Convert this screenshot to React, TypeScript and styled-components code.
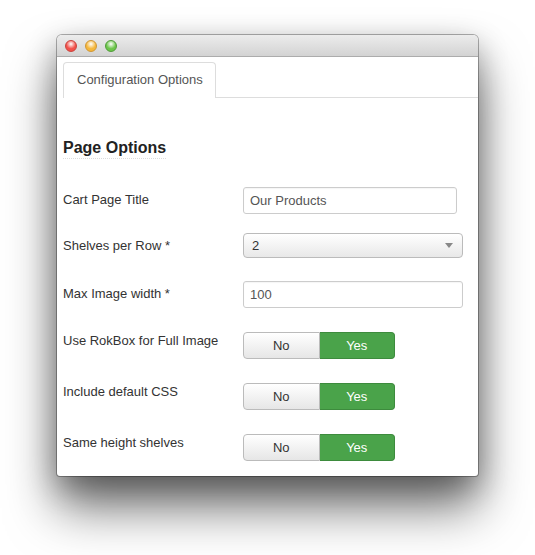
import React from 'react';
import styled, { createGlobalStyle } from 'styled-components';

const GlobalStyle = createGlobalStyle`
  html, body {
    margin: 0;
    padding: 0;
    background: #ffffff;
  }
  body {
    font-family: "Liberation Sans", Arial, Helvetica, sans-serif;
    font-size: 13px;
    color: #333333;
  }
`;

const Page = styled.div`
  width: 535px;
  height: 555px;
  padding: 35px 0 0 57px;
  box-sizing: border-box;
  overflow: hidden;
`;

const Window = styled.div`
  width: 421px;
  height: 441px;
  background: #ffffff;
  border-radius: 5px 5px 3px 3px;
  box-shadow: 0 0 0 1px rgba(0, 0, 0, 0.3), 0 32px 50px rgba(0, 0, 0, 0.55), 0 10px 30px rgba(0, 0, 0, 0.3);
  overflow: hidden;
  display: flex;
  flex-direction: column;
`;

const TitleBar = styled.div`
  height: 22px;
  flex: none;
  box-sizing: border-box;
  background: linear-gradient(#ececec, #d3d3d3);
  border-bottom: 1px solid #acacac;
  display: flex;
  align-items: center;
  gap: 8px;
  padding: 0 0 0 8px;
`;

const Light = styled.span<{ $color: string; $edge: string }>`
  width: 12px;
  height: 12px;
  border-radius: 50%;
  box-sizing: border-box;
  border: 1px solid ${p => p.$edge};
  background: radial-gradient(circle at 50% 30%, #ffffff 0%, ${p => p.$color} 55%, ${p => p.$color} 100%);
`;

const Body = styled.div`
  padding: 5px 0 0 6px;
  flex: 1;
`;

const Tabs = styled.div`
  display: flex;
  align-items: flex-end;
  height: 36px;
`;

const Tab = styled.div`
  height: 36px;
  box-sizing: border-box;
  padding: 0 12px 2px 13px;
  border: 1px solid #dddddd;
  border-bottom: none;
  border-radius: 4px 4px 0 0;
  background: #ffffff;
  display: flex;
  align-items: center;
  color: #555555;
  font-size: 13px;
`;

const TabLine = styled.div`
  flex: 1;
  border-bottom: 1px solid #dddddd;
`;

const Heading = styled.h3`
  display: inline-block;
  margin: 41px 0 28px 0;
  padding-bottom: 1px;
  font-size: 16px;
  line-height: 18px;
  font-weight: bold;
  color: #222222;
  border-bottom: 1px dotted #dddddd;
`;

const Row = styled.div<{ $h: number }>`
  display: flex;
  align-items: flex-start;
  height: ${p => p.$h}px;
`;

const Label = styled.label<{ $top: number }>`
  width: 180px;
  flex: none;
  padding-top: ${p => p.$top}px;
  line-height: 18px;
  color: #333333;
`;

const TextInput = styled.div<{ $w: number }>`
  width: ${p => p.$w}px;
  height: 27px;
  box-sizing: border-box;
  border: 1px solid #cccccc;
  border-radius: 3px;
  padding: 0 6px;
  display: flex;
  align-items: center;
  color: #555555;
  box-shadow: inset 0 1px 1px rgba(0, 0, 0, 0.04);
`;

const Select = styled.div`
  width: 220px;
  height: 25px;
  box-sizing: border-box;
  border: 1px solid #bbbbbb;
  border-radius: 4px;
  padding: 0 9px 0 8px;
  display: flex;
  align-items: center;
  justify-content: space-between;
  background: linear-gradient(#ffffff, #e8e8e8);
  color: #333333;
`;

const Caret = styled.span`
  width: 0;
  height: 0;
  border-left: 4px solid transparent;
  border-right: 4px solid transparent;
  border-top: 5px solid #888888;
`;

const Toggle = styled.div`
  display: flex;
  width: 152px;
  height: 27px;
`;

const ToggleButton = styled.div<{ $on?: boolean }>`
  flex: 1;
  box-sizing: border-box;
  display: flex;
  align-items: center;
  justify-content: center;
  font-size: 13px;
  border: 1px solid ${p => (p.$on ? '#3d8b3d' : '#bbbbbb')};
  border-left: ${p => (p.$on ? 'none' : undefined)};
  border-radius: ${p => (p.$on ? '0 4px 4px 0' : '4px 0 0 4px')};
  background: ${p => (p.$on ? '#4aa34a' : 'linear-gradient(#ffffff, #e6e6e6)')};
  color: ${p => (p.$on ? '#ffffff' : '#333333')};
`;

const toggles = ['Use RokBox for Full Image', 'Include default CSS', 'Same height shelves'];

export default function App() {
  return (
    <Page>
      <GlobalStyle />
      <Window>
        <TitleBar>
          <Light $color="#f2514a" $edge="#c9413b" />
          <Light $color="#f5b73b" $edge="#cf9532" />
          <Light $color="#6cc64a" $edge="#4e9a37" />
        </TitleBar>
        <Body>
          <Tabs>
            <Tab>Configuration Options</Tab>
            <TabLine />
          </Tabs>
          <Heading>Page Options</Heading>
          <Row $h={46}>
            <Label $top={4}>Cart Page Title</Label>
            <TextInput $w={214}>Our Products</TextInput>
          </Row>
          <Row $h={48}>
            <Label $top={4}>Shelves per Row *</Label>
            <Select>
              <span>2</span>
              <Caret />
            </Select>
          </Row>
          <Row $h={51}>
            <Label $top={4}>Max Image width *</Label>
            <TextInput $w={220}>100</TextInput>
          </Row>
          {toggles.map(t => (
            <Row $h={51} key={t}>
              <Label $top={0}>{t}</Label>
              <Toggle>
                <ToggleButton>No</ToggleButton>
                <ToggleButton $on>Yes</ToggleButton>
              </Toggle>
            </Row>
          ))}
        </Body>
      </Window>
    </Page>
  );
}
